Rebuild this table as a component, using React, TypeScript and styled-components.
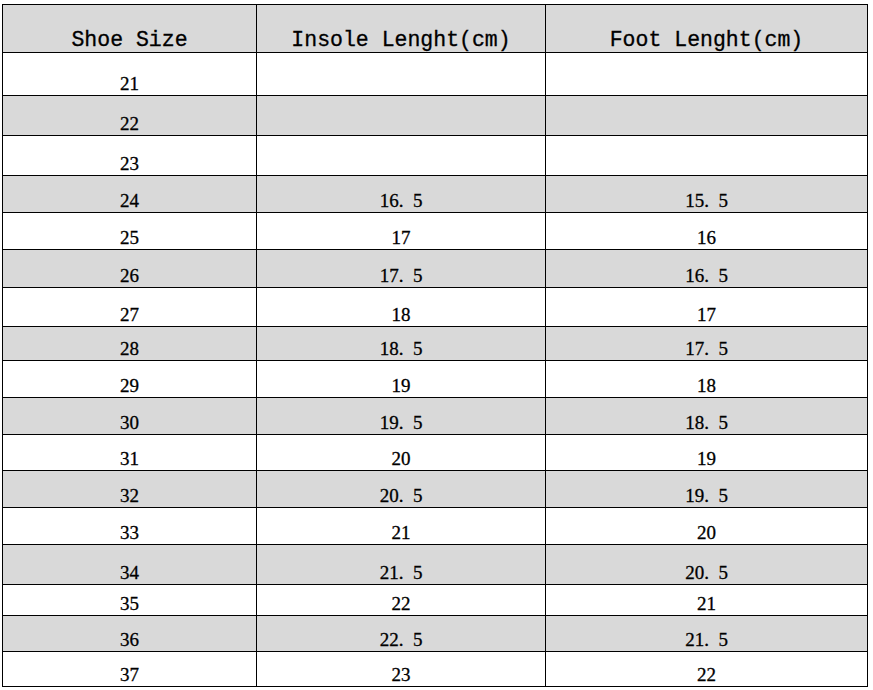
import styled, { createGlobalStyle } from 'styled-components';

const GlobalStyle = createGlobalStyle`
  html, body {
    margin: 0;
    padding: 0;
    background: #fff;
  }
`;

const Page = styled.div`
  padding: 4px 0 0 2px;
  width: 873px;
  height: 690px;
  box-sizing: border-box;
  overflow: hidden;
`;

const Grid = styled.div`
  display: grid;
  grid-template-columns: 254px 289px 322px;
  width: 866px;
  border-top: 1px solid #000;
  border-left: 1px solid #000;
  box-sizing: border-box;
`;

const Cell = styled.div<{ $shade: boolean; $h: number; $head?: boolean }>`
  display: flex;
  align-items: flex-end;
  justify-content: center;
  box-sizing: border-box;
  height: ${(p) => p.$h}px;
  padding-bottom: ${(p) => (p.$head ? 1 : 2)}px;
  background: ${(p) => (p.$shade ? '#d9d9d9' : '#fff')};
  border-right: 1px solid #000;
  border-bottom: 1px solid #000;
  color: #000;
  font-family: ${(p) =>
    p.$head ? '"Liberation Mono", monospace' : '"Liberation Serif", serif'};
  font-size: ${(p) => (p.$head ? 21.5 : 19)}px;
  -webkit-text-stroke: 0.3px #000;
  line-height: 1;
  white-space: pre;
`;

const headers = ['Shoe Size', 'Insole Lenght(cm)', 'Foot Lenght(cm)'];

// half-sizes are written with a wide point, as in the sheet
const half = (n: number) => `${n}.\u20025`;

const rows: [string, string, string, number][] = [
  ['21', '', '', 43],
  ['22', '', '', 40],
  ['23', '', '', 40],
  ['24', half(16), half(15), 37],
  ['25', '17', '16', 37],
  ['26', half(17), half(16), 38],
  ['27', '18', '17', 39],
  ['28', half(18), half(17), 34],
  ['29', '19', '18', 37],
  ['30', half(19), half(18), 37],
  ['31', '20', '19', 36],
  ['32', half(20), half(19), 37],
  ['33', '21', '20', 37],
  ['34', half(21), half(20), 40],
  ['35', '22', '21', 31],
  ['36', half(22), half(21), 36],
  ['37', '23', '22', 35],
];

export default function App() {
  return (
    <>
      <GlobalStyle />
      <Page>
        <Grid>
          {headers.map((h) => (
            <Cell key={h} $shade $h={48} $head>
              {h}
            </Cell>
          ))}
          {rows.map(([size, insole, foot, h], i) => {
            const shade = i % 2 === 1;
            return [size, insole, foot].map((v, j) => (
              <Cell key={`${size}-${j}`} $shade={shade} $h={h}>
                {v}
              </Cell>
            ));
          })}
        </Grid>
      </Page>
    </>
  );
}
